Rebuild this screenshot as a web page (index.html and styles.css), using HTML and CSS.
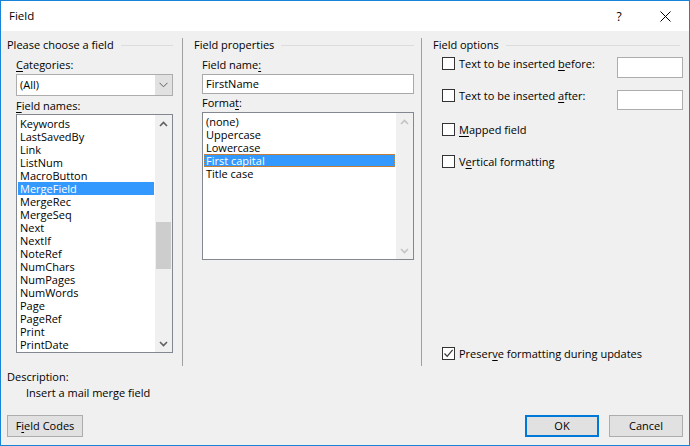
FILE: index.html
```html
<!DOCTYPE html>
<html lang="en">
<head>
<meta charset="utf-8">
<title>Field</title>
<link rel="stylesheet" href="styles.css">
</head>
<body>
<div class="window">
  <div class="titlebar">
    <span class="title">Field</span>
    <span class="help">?</span>
    <span class="close"><svg width="11" height="11" viewBox="0 0 11 11"><path d="M0.5 0.5 L10.5 10.5 M10.5 0.5 L0.5 10.5" stroke="#000" stroke-width="1"/></svg></span>
  </div>
  <div class="body">
    <div class="columns">
      <section class="col col-left">
        <div class="group-head"><span>Please choose a field</span><i class="rule"></i></div>
        <div class="content">
          <div class="label label-first"><u>C</u>ategories:</div>
          <div class="combo">
            <span class="combo-value">(All)</span>
            <span class="combo-btn"><svg width="9" height="6" viewBox="0 0 9 6"><path d="M0.5 0.8 L4.5 4.8 L8.5 0.8" fill="none" stroke="#606060" stroke-width="1"/></svg></span>
          </div>
          <div class="label label-names"><u>F</u>ield names:</div>
          <div class="listbox listbox-names">
            <ul class="items">
              <li>Keywords</li>
              <li>LastSavedBy</li>
              <li>Link</li>
              <li>ListNum</li>
              <li>MacroButton</li>
              <li class="selected">MergeField</li>
              <li>MergeRec</li>
              <li>MergeSeq</li>
              <li>Next</li>
              <li>NextIf</li>
              <li>NoteRef</li>
              <li>NumChars</li>
              <li>NumPages</li>
              <li>NumWords</li>
              <li>Page</li>
              <li>PageRef</li>
              <li>Print</li>
              <li>PrintDate</li>
            </ul>
            <div class="scrollbar">
              <span class="arrow arrow-up"><svg width="9" height="6" viewBox="0 0 9 6"><path d="M1 5 L4.5 1.5 L8 5" fill="none" stroke="#606060" stroke-width="1.6"/></svg></span>
              <span class="track"><span class="thumb"></span></span>
              <span class="arrow arrow-down"><svg width="9" height="6" viewBox="0 0 9 6"><path d="M1 1 L4.5 4.5 L8 1" fill="none" stroke="#606060" stroke-width="1.6"/></svg></span>
            </div>
          </div>
        </div>
      </section>

      <section class="col col-mid">
        <div class="group-head"><span>Field properties</span><i class="rule"></i></div>
        <div class="content">
          <div class="label label-first">Field name<u>:</u></div>
          <div class="textbox textbox-name">FirstName</div>
          <div class="label label-format">Forma<u>t</u>:</div>
          <div class="listbox listbox-format">
            <ul class="items">
              <li>(none)</li>
              <li>Uppercase</li>
              <li>Lowercase</li>
              <li class="selected focused">First capital</li>
              <li>Title case</li>
            </ul>
            <div class="scrollbar disabled">
              <span class="arrow arrow-up"><svg width="9" height="6" viewBox="0 0 9 6"><path d="M1 5 L4.5 1.5 L8 5" fill="none" stroke="#c3c3c3" stroke-width="1.6"/></svg></span>
              <span class="track"></span>
              <span class="arrow arrow-down"><svg width="9" height="6" viewBox="0 0 9 6"><path d="M1 1 L4.5 4.5 L8 1" fill="none" stroke="#c3c3c3" stroke-width="1.6"/></svg></span>
            </div>
          </div>
        </div>
      </section>

      <section class="col col-right">
        <div class="group-head"><span>Field options</span><i class="rule"></i></div>
        <div class="content">
          <div class="opt-row row-before">
            <span class="checkbox"></span>
            <span class="opt-label">Text to be inserted <u>b</u>efore:</span>
            <span class="textbox small-box"></span>
          </div>
          <div class="opt-row row-after">
            <span class="checkbox"></span>
            <span class="opt-label">Text to be inserted <u>a</u>fter:</span>
            <span class="textbox small-box"></span>
          </div>
          <div class="opt-row row-mapped">
            <span class="checkbox"></span>
            <span class="opt-label"><u>M</u>apped field</span>
          </div>
          <div class="opt-row row-vertical">
            <span class="checkbox"></span>
            <span class="opt-label">V<u>e</u>rtical formatting</span>
          </div>
          <div class="opt-row row-preserve">
            <span class="checkbox checked"><svg width="11" height="11" viewBox="0 0 11 11"><path d="M1.5 5.5 L4.2 8.3 L9.6 1.8" fill="none" stroke="#333" stroke-width="1.2"/></svg></span>
            <span class="opt-label">Preser<u>v</u>e formatting during updates</span>
          </div>
        </div>
      </section>
    </div>

    <div class="description">
      <div class="desc-title">Description:</div>
      <div class="desc-text">Insert a mail merge field</div>
    </div>

    <div class="buttons">
      <button class="btn btn-codes" type="button">F<u>i</u>eld Codes</button>
      <span class="spacer"></span>
      <button class="btn btn-ok" type="button">OK</button>
      <button class="btn btn-cancel" type="button">Cancel</button>
    </div>
  </div>
</div>
</body>
</html>
```

FILE: styles.css
```css
* {
  box-sizing: border-box;
}

html, body {
  margin: 0;
  padding: 0;
}

body {
  width: 690px;
  height: 446px;
  overflow: hidden;
  font-family: "Open Sans", "Noto Sans", sans-serif;
  font-size: 11px;
  color: #000;
}

u {
  text-decoration: underline;
  text-underline-offset: 2px;
}

.window {
  width: 690px;
  height: 446px;
  border: 1px solid #1883d7;
  background: #f0f0f0;
  display: flex;
  flex-direction: column;
}

/* Title bar */
.titlebar {
  height: 30px;
  flex-shrink: 0;
  background: #fff;
  display: flex;
  align-items: center;
  padding-left: 8px;
}

.title {
  flex: 1;
  font-size: 11.5px;
  line-height: 14px;
}

.help {
  width: 12px;
  text-align: center;
  font-size: 12px;
  margin-right: 35px;
}

.close {
  width: 11px;
  height: 11px;
  display: flex;
  margin-right: 18px;
}

/* Body */
.body {
  flex: 1;
  display: flex;
  flex-direction: column;
  padding-top: 7px;
}

.columns {
  display: grid;
  grid-template-columns: 182px 239px 267px;
  height: 328px;
}

.col {
  display: flex;
  flex-direction: column;
}

.col-left,
.col-mid {
  border-right: 1px solid #a0a0a0;
}

.group-head {
  height: 14px;
  line-height: 14px;
  display: flex;
  align-items: center;
  white-space: nowrap;
}

.group-head .rule {
  flex: 1;
  height: 1px;
  background: #dcdcdc;
  margin-left: 7px;
}

.col-left .group-head { padding-left: 6px; }
.col-left .group-head .rule { margin-right: 9px; }
.col-mid .group-head { padding-left: 11px; }
.col-mid .group-head .rule { margin-right: 7px; }
.col-right .group-head { padding-left: 11px; }
.col-right .group-head .rule { margin-right: 9px; }

.content {
  display: flex;
  flex-direction: column;
  flex: 1;
}

.col-left .content { padding: 0 9px 0 15px; }
.col-mid .content { padding: 0 7px 0 19px; }
.col-right .content { padding: 0 6px 0 20px; }

.label {
  height: 14px;
  line-height: 14px;
}

.label-first { margin-top: 6px; }
.label-names { margin-top: 3px; }
.label-format { margin-top: 2px; }

/* Combo box */
.combo {
  margin-top: 2px;
  height: 22px;
  border: 1px solid #adadad;
  background: #fff;
  display: flex;
}

.combo-value {
  flex: 1;
  padding-left: 3px;
  line-height: 20px;
}

.combo-btn {
  width: 17px;
  background: #e1e1e1;
  display: flex;
  align-items: center;
  justify-content: center;
}

/* Text boxes */
.textbox {
  border: 1px solid #a9a9a9;
  background: #fff;
}

.textbox-name {
  margin-top: 2px;
  height: 20px;
  line-height: 18px;
  padding-left: 3px;
}

/* List boxes */
.listbox {
  border: 1px solid #828790;
  background: #fff;
  display: flex;
}

.listbox-names {
  margin-top: 1px;
  height: 239px;
}

.listbox-format {
  margin-top: 2px;
  height: 148px;
}

.items {
  list-style: none;
  margin: 0;
  padding: 2px 1px 0 1px;
  flex: 1;
}

.items li {
  height: 13px;
  line-height: 13px;
  padding-left: 2px;
  white-space: nowrap;
}

.items li.selected {
  background: #3399ff;
  color: #fff;
}

.items li.focused {
  outline: 1px dotted #c7823a;
  outline-offset: -1px;
}

.scrollbar {
  width: 17px;
  background: #f0f0f0;
  display: flex;
  flex-direction: column;
}

.scrollbar .arrow {
  height: 17px;
  display: flex;
  align-items: center;
  justify-content: center;
  flex-shrink: 0;
}

.scrollbar .track {
  flex: 1;
  position: relative;
}

.scrollbar .thumb {
  position: absolute;
  left: 1px;
  right: 1px;
  top: 90px;
  height: 47px;
  background: #cdcdcd;
}

/* Options */
.opt-row {
  display: flex;
  align-items: flex-start;
}

.checkbox {
  width: 13px;
  height: 13px;
  border: 1px solid #333;
  background: #fff;
  flex-shrink: 0;
  display: flex;
  align-items: center;
  justify-content: center;
}

.opt-label {
  margin-left: 4px;
  line-height: 13px;
  white-space: nowrap;
  flex: 1;
}

.small-box {
  width: 66px;
  height: 21px;
  border-color: #adadad;
}

.row-before { margin-top: 5px; }
.row-after { margin-top: 11px; }
.row-after .small-box { margin-top: 1px; height: 20px; }
.row-mapped { margin-top: 13px; }
.row-vertical { margin-top: 19px; }
.row-preserve { margin-top: auto; margin-bottom: 6px; }

/* Description */
.description {
  margin-top: 4px;
}

.desc-title {
  height: 14px;
  line-height: 14px;
  padding-left: 6px;
}

.desc-text {
  margin-top: 2px;
  height: 14px;
  line-height: 14px;
  padding-left: 25px;
}

/* Buttons */
.buttons {
  margin-top: 15px;
  display: flex;
  padding: 0 6px;
}

.spacer {
  flex: 1;
}

.btn {
  font-family: inherit;
  font-size: 11px;
  color: #000;
  height: 22px;
  padding: 0;
  background: #e1e1e1;
  border: 1px solid #adadad;
  border-radius: 0;
  line-height: 18px;
}

.btn-codes { width: 76px; }

.btn-ok {
  width: 74px;
  border: 2px solid #0078d7;
}

.btn-cancel {
  width: 74px;
  margin-left: 10px;
}
```
